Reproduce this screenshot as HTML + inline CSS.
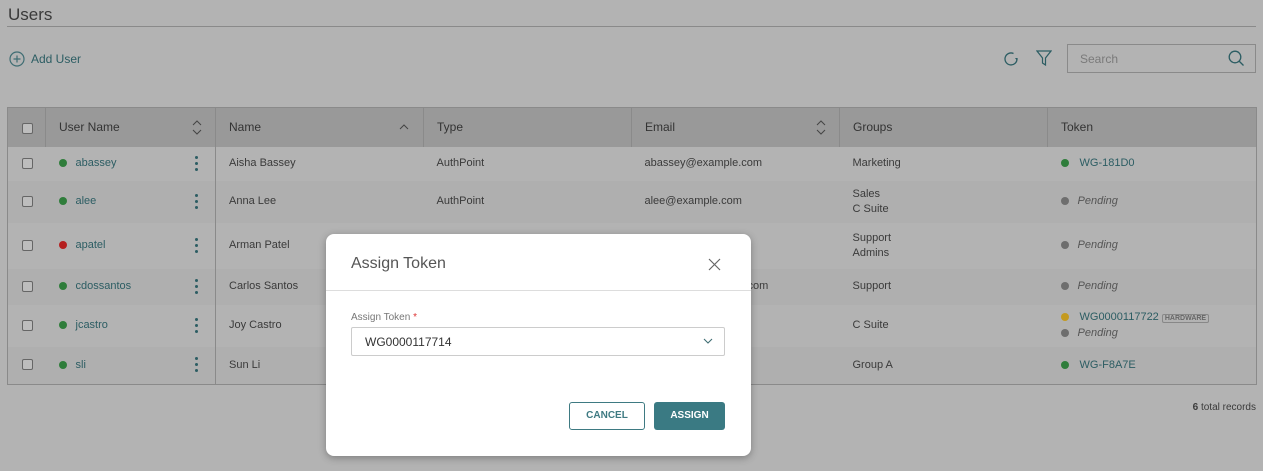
<!DOCTYPE html>
<html><head><style>
*{box-sizing:border-box;margin:0;padding:0}
body{width:1263px;height:471px;overflow:hidden;background:#b3b3b3;font-family:"Liberation Sans",sans-serif;position:relative;color:#3a3a3a;font-size:11px}
.abs{position:absolute}
.link{color:#2c5d63}
table{position:absolute;left:7px;top:107px;width:1250px;border-collapse:collapse;border:1px solid #8a8a8a}
th{background:#999;height:39px;text-align:left;font-weight:normal;font-size:12px;padding-left:13px;border-left:1px solid #8a8a8a;color:#333;position:relative}
td{padding-left:13px;font-size:11px;position:relative;color:#3a3a3a;line-height:15px}
tr.a td{background:#b3b3b3}tr.b td{background:#afafaf}
.cb{width:11px;height:11px;border:1px solid #666;border-radius:2px;background:#bdbdbd;display:inline-block;vertical-align:middle}
.dot{display:inline-block;width:8px;height:8px;border-radius:50%;margin-right:9px;vertical-align:-1px}
.g{background:#2f7d3b}.r{background:#b52020}.gr{background:#6e6e6e}.y{background:#c49a20}
.kb{position:absolute;left:149px;top:50%;margin-top:-8px;width:3px}
.kb i{display:block;width:3px;height:3px;border-radius:50%;background:#2c5d63;margin-bottom:3px}
.pend{font-style:italic;color:#555}
.srt{position:absolute;right:13px;top:12px}
</style></head><body>
<div class="abs" style="left:8px;top:5px;font-size:17px;color:#3a3a3a">Users</div>
<div class="abs" style="left:7px;top:26px;width:1249px;height:1px;background:#8a8a8a"></div>
<svg class="abs" style="left:9px;top:51px" width="16" height="16" viewBox="0 0 16 16"><circle cx="8" cy="8" r="7" fill="none" stroke="#3f6d73" stroke-width="1.2"/><path d="M8 4.5v7M4.5 8h7" stroke="#3f6d73" stroke-width="1.2"/></svg>
<div class="abs link" style="left:31px;top:52px;font-size:12px">Add User</div>
<svg class="abs" style="left:1002px;top:50px" width="18" height="18" viewBox="0 0 18 18"><path d="M15 9A6 6 0 1 1 11.5 3.5" fill="none" stroke="#2c5d63" stroke-width="1.3"/><path d="M16 8l-1.5 2-1.5-2z" fill="#2c5d63"/></svg>
<svg class="abs" style="left:1036px;top:50px" width="16" height="17" viewBox="0 0 16 17"><path d="M1 1h14l-5.5 7v7l-3-2V8z" fill="none" stroke="#2c5d63" stroke-width="1.2"/></svg>
<div class="abs" style="left:1067px;top:44px;width:189px;height:29px;border:1px solid #8a8a8a;background:#b3b3b3"></div>
<div class="abs" style="left:1080px;top:52px;color:#7a7a7a;font-size:12px">Search</div>
<svg class="abs" style="left:1228px;top:50px" width="17" height="17" viewBox="0 0 17 17"><circle cx="7" cy="7" r="5.8" fill="none" stroke="#2c5d63" stroke-width="1.3"/><path d="M11 11l4.5 4.5" stroke="#2c5d63" stroke-width="1.3"/></svg>
<table>
<tr><th style="width:38px;border-left:none;padding-left:14px"><span class="cb"></span></th><th style="width:170px">User Name<svg class="srt" width="10" height="15" viewBox="0 0 10 15"><path d="M1 5l4-4 4 4M1 10l4 4 4-4" fill="none" stroke="#444" stroke-width="1"/></svg></th><th style="width:208px">Name<svg class="srt" style="top:16px;right:14px" width="10" height="6" viewBox="0 0 10 6"><path d="M1 5l4-4 4 4" fill="none" stroke="#444" stroke-width="1"/></svg></th><th style="width:208px">Type</th><th style="width:208px">Email<svg class="srt" width="10" height="15" viewBox="0 0 10 15"><path d="M1 5l4-4 4 4M1 10l4 4 4-4" fill="none" stroke="#444" stroke-width="1"/></svg></th><th style="width:208px">Groups</th><th>Token</th></tr>
<tr class="a" style="height:34px"><td style="padding-left:14px"><span class="cb"></span></td><td><span class="dot g"></span><span class="link">abassey</span><span class="kb"><i></i><i></i><i></i></span></td><td style="border-left:1px solid #8a8a8a">Aisha Bassey</td><td>AuthPoint</td><td>abassey@example.com</td><td>Marketing</td><td><span class="dot g"></span><span class="link" style="margin-left:2px">WG-181D0</span></td></tr>
<tr class="b" style="height:42px"><td style="padding-left:14px"><span class="cb"></span></td><td><span class="dot g"></span><span class="link">alee</span><span class="kb"><i></i><i></i><i></i></span></td><td style="border-left:1px solid #8a8a8a">Anna Lee</td><td>AuthPoint</td><td>alee@example.com</td><td>Sales<br>C Suite</td><td><span class="dot gr"></span><span class="pend">Pending</span></td></tr>
<tr class="a" style="height:46px"><td style="padding-left:14px"><span class="cb"></span></td><td><span class="dot r"></span><span class="link">apatel</span><span class="kb"><i></i><i></i><i></i></span></td><td style="border-left:1px solid #8a8a8a">Arman Patel</td><td></td><td></td><td>Support<br>Admins</td><td><span class="dot gr"></span><span class="pend">Pending</span></td></tr>
<tr class="b" style="height:36px"><td style="padding-left:14px"><span class="cb"></span></td><td><span class="dot g"></span><span class="link">cdossantos</span><span class="kb"><i></i><i></i><i></i></span></td><td style="border-left:1px solid #8a8a8a">Carlos Santos</td><td></td><td style="padding-left:113px">.com</td><td>Support</td><td><span class="dot gr"></span><span class="pend">Pending</span></td></tr>
<tr class="a" style="height:42px"><td style="padding-left:14px"><span class="cb"></span></td><td><span class="dot g"></span><span class="link">jcastro</span><span class="kb"><i></i><i></i><i></i></span></td><td style="border-left:1px solid #8a8a8a">Joy Castro</td><td></td><td></td><td>C Suite</td><td><span class="dot y"></span><span class="link" style="margin-left:2px">WG0000117722</span> <span style="font-size:7px;font-weight:bold;color:#666;border:1px solid #888;border-radius:2px;padding:0 2px">HARDWARE</span><br><span class="dot gr"></span><span class="pend">Pending</span></td></tr>
<tr class="b" style="height:38px"><td style="padding-left:14px"><span class="cb"></span></td><td><span class="dot g"></span><span class="link">sli</span><span class="kb"><i></i><i></i><i></i></span></td><td style="border-left:1px solid #8a8a8a">Sun Li</td><td></td><td></td><td>Group A</td><td><span class="dot g"></span><span class="link" style="margin-left:2px">WG-F8A7E</span></td></tr>
</table>
<div class="abs" style="right:7px;top:402px;font-size:10px;color:#3a3a3a"><b>6</b> total records</div>
<div class="abs" style="left:326px;top:234px;width:425px;height:222px;background:#fff;border-radius:8px;box-shadow:0 2px 8px rgba(0,0,0,.3)">
<div class="abs" style="left:25px;top:21px;font-size:16px;color:#555">Assign Token</div>
<svg class="abs" style="left:382px;top:24px" width="13" height="13" viewBox="0 0 13 13"><path d="M1 1l11 11M12 1L1 12" stroke="#666" stroke-width="1.2"/></svg>
<div class="abs" style="left:0;top:56px;width:425px;height:1px;background:#ddd"></div>
<div class="abs" style="left:25px;top:78px;font-size:10px;color:#777">Assign Token <span style="color:#d33">*</span></div>
<div class="abs" style="left:25px;top:93px;width:374px;height:29px;border:1px solid #ccc;border-radius:2px"></div>
<div class="abs" style="left:39px;top:101px;font-size:12px;color:#333">WG0000117714</div>
<svg class="abs" style="left:377px;top:104px" width="10" height="6" viewBox="0 0 10 6"><path d="M1 1l4 4 4-4" fill="none" stroke="#3f6d73" stroke-width="1.1"/></svg>
<div class="abs" style="left:243px;top:168px;width:76px;height:28px;border:1px solid #3e7a82;border-radius:3px;color:#3e7a82;font-weight:bold;font-size:10px;text-align:center;line-height:26px">CANCEL</div>
<div class="abs" style="left:328px;top:168px;width:71px;height:28px;background:#3a7a83;border-radius:3px;color:#fff;font-weight:bold;font-size:10px;text-align:center;line-height:28px">ASSIGN</div>
</div>
</body></html>
